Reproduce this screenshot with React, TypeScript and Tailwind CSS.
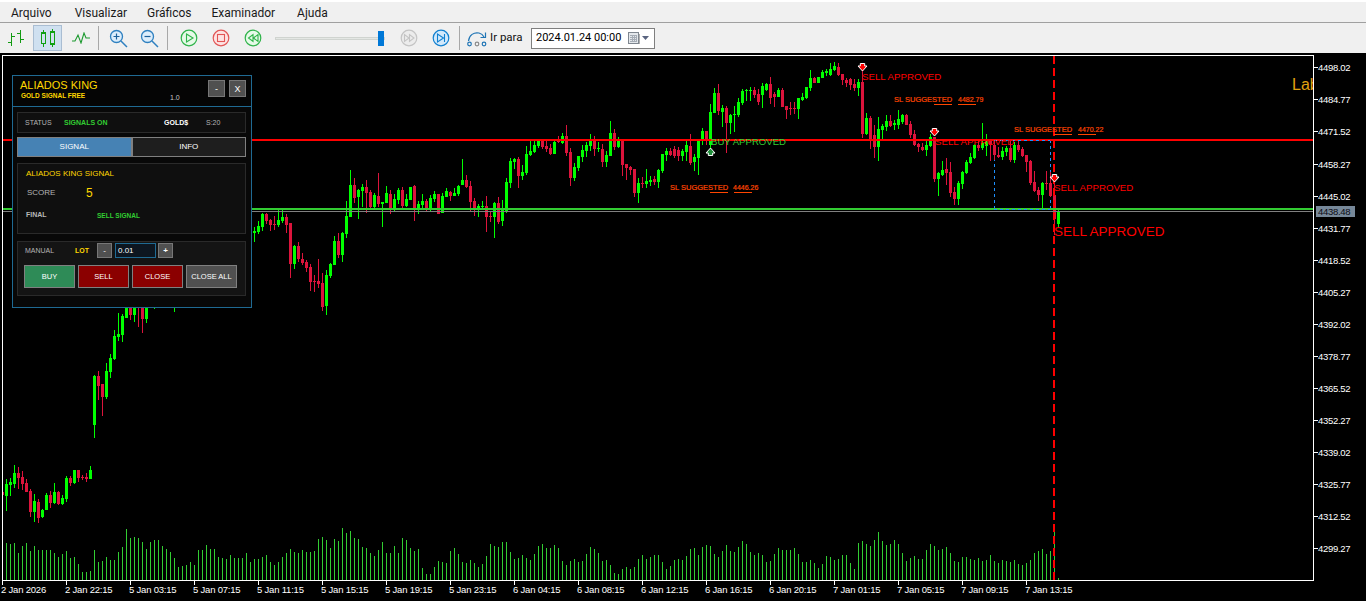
import React from "react";

type C = [number, number, number, number, number, number];
const candles: C[] = [
[6,479,484,496,511,1],[10,478,482,485,496,1],[14,465,473,484,488,1],[18,467,473,478,489,0],[22,471,477,484,490,0],[26,479,483,492,492,0],[30,489,491,512,517,0],[34,494,501,512,522,1],[38,499,502,518,523,0],[42,509,510,517,518,1],[46,493,495,510,510,1],[50,491,495,503,508,0],[54,483,492,503,504,1],[58,491,492,504,505,0],[62,495,498,504,505,1],[66,476,478,499,502,1],[70,476,478,483,486,0],[74,470,470,483,484,1],[78,470,470,478,482,0],[82,475,477,478,480,0],[86,473,477,479,482,0],[90,466,470,479,479,1],
[94,375,376,425,438,1],[98,371,376,386,400,0],[102,384,384,397,416,0],[106,363,371,397,399,1],[110,354,358,372,378,1],[114,330,336,359,360,1],[118,313,334,337,341,1],[122,314,316,335,342,1],
[126,300,300,318,318,1],[130,300,300,315,320,0],[134,300,300,315,322,1],[138,300,300,301,327,0],[142,300,300,319,333,0],[146,300,300,319,323,1],[154,300,300,301,309,1],[174,300,300,301,312,1],
[254,227,231,233,242,1],[258,221,226,232,234,1],[262,213,214,227,231,1],[266,213,214,221,224,0],[270,219,220,225,231,0],[274,216,224,225,230,0],[278,209,220,225,227,1],[282,209,217,221,223,1],[286,214,217,225,233,0],[290,223,223,264,278,0],[294,245,246,264,269,1],[298,242,246,259,262,0],[302,253,259,263,265,0],[306,260,262,268,272,0],[310,264,267,282,291,0],[314,275,281,282,292,0],[318,259,281,284,288,0],[322,273,283,307,311,0],[326,270,275,306,315,1],[330,263,264,276,278,1],[334,236,241,265,265,1],[338,233,241,255,258,0],[342,232,233,255,262,1],[346,201,216,234,238,1],[350,170,185,217,217,1],[354,178,185,198,203,0],[358,189,190,197,219,1],[362,184,187,191,207,1],[366,180,187,193,213,0],[370,190,192,207,209,0],[374,193,195,207,209,1],[378,173,196,204,207,0],[382,202,202,204,227,1],[386,186,193,203,203,1],[390,190,194,210,214,0],[394,194,199,210,211,1],[398,188,190,200,204,1],[402,187,190,206,209,0],[406,194,199,206,207,1],[410,187,187,200,200,1],[414,185,186,209,221,0],[418,201,204,209,214,1],[422,194,201,205,210,1],[426,199,201,208,212,0],[430,195,198,208,211,1],[434,191,194,199,202,1],[438,194,194,214,214,0],[442,193,196,213,213,1],[446,188,191,197,197,1],[450,191,192,196,201,0],[454,188,193,196,196,1],[458,185,186,194,196,1],[462,159,180,185,185,1],[466,175,180,187,188,0],[470,181,186,202,212,0],[474,198,201,210,216,0],[478,204,206,208,217,1],[482,201,206,207,208,1],[486,196,206,217,232,0],[490,212,216,217,222,0],[494,202,203,217,238,1],[498,197,203,222,224,0],[502,200,208,221,226,1],[506,178,182,212,213,1],[510,158,161,183,188,1],[514,158,159,162,169,1],[518,157,159,176,188,0],[522,165,172,176,180,1],[526,146,154,173,175,1],[530,140,151,155,156,1],[534,140,145,152,153,1],[538,140,141,146,148,1],
[542,140,140,147,149,0],[546,141,146,149,152,0],[550,144,148,154,155,0],[554,139,142,154,154,1],[558,136,139,142,143,0],[562,133,136,143,144,1],[566,125,136,153,156,0],[570,148,152,178,186,0],[574,163,167,178,181,1],[578,156,156,168,171,1],[582,145,150,157,162,1],[586,142,145,151,157,1],[590,134,139,146,151,1],[594,136,139,149,156,0],[598,142,148,149,152,1],[602,144,149,162,167,0],[606,151,155,162,167,1],[610,121,133,156,156,1],[614,129,133,147,150,0],[618,137,140,147,148,1],[622,139,140,165,176,0],[626,164,164,168,180,0],[630,166,167,170,175,0],[634,169,169,193,197,0],[638,178,183,193,203,1],[642,177,183,184,188,0],[646,169,181,184,188,1],[650,176,180,182,186,1],[654,176,179,182,185,0],[658,169,170,182,188,1],[662,154,154,171,173,1],[666,148,151,155,161,1],
[670,148,151,155,156,0],[674,146,149,156,158,0],[678,147,150,156,161,0],[682,149,151,156,161,1],[686,140,145,152,161,1],[690,134,146,163,165,0],[694,154,157,162,171,1],[698,140,140,158,175,1],[702,128,131,141,145,1],[706,131,131,141,145,0],[710,104,112,145,150,1],[714,88,93,113,113,1],[718,84,93,111,115,0],[722,105,108,112,127,1],[726,106,108,123,153,0],[730,114,115,123,134,1],[734,106,114,115,132,1],[738,98,102,115,117,1],[742,89,91,103,105,1],[746,89,90,91,101,1],[750,87,90,91,101,1],[754,87,90,95,98,0],[758,89,94,102,105,0],[762,83,86,95,108,1],[766,83,84,90,91,1],[770,77,84,98,104,0],[774,92,94,97,107,0],[778,88,90,97,97,1],[782,88,90,107,107,0],[786,106,106,110,119,0],[790,102,108,109,115,0],[794,102,108,109,114,0],[798,98,98,109,119,1],[802,93,97,100,101,1],[806,87,87,98,99,1],[810,70,78,88,91,1],[814,77,78,83,83,0],[818,77,77,83,83,1],[822,70,72,78,78,1],[826,69,71,73,76,1],[830,63,69,75,76,1],[834,62,66,70,71,1],[838,63,67,75,76,0],[842,74,74,80,85,0],[846,78,80,83,87,0],[850,78,79,85,90,0],[854,79,84,88,91,0],[858,79,82,88,96,1],[862,70,82,134,138,0],[866,113,118,134,135,1],[870,116,118,139,149,0],[874,125,135,147,158,0],[878,117,129,147,161,1],[882,124,126,130,140,1],[886,115,121,127,131,1],[890,115,121,126,127,0],[894,120,123,125,130,1],[898,110,119,125,129,1],[902,114,115,122,124,1],[906,114,115,125,125,0],[910,121,124,135,138,0],[914,130,134,145,146,0],[918,143,144,147,152,0],[922,143,147,150,151,0],[926,141,145,150,156,1],[930,134,137,146,147,1],[934,137,137,179,182,0],[938,172,173,179,196,1],[942,161,170,175,176,1],[946,158,169,173,185,0],[950,162,172,193,197,0],[954,187,192,199,205,0],[958,181,183,199,205,1],[962,171,172,184,189,1],[966,160,162,173,174,1],[970,153,157,163,164,1],[974,144,145,158,159,1],[978,140,145,148,151,0],[982,123,143,148,150,1],[986,134,140,146,156,1],[990,140,141,145,161,0],[994,141,145,155,160,0],[998,147,155,157,158,0],[1002,147,151,157,160,1],[1006,146,148,152,156,1],[1010,141,148,160,162,0],[1014,142,145,160,163,1],[1018,140,145,150,152,0],[1022,147,149,156,157,0],[1026,155,155,162,172,0],[1030,160,161,183,185,0],[1034,171,182,191,192,0],[1038,187,190,195,201,0],[1042,182,183,195,209,1],[1046,171,183,184,190,0],[1050,172,183,196,197,0],[1054,174,195,219,235,0],[1058,210,211,224,227,1],
];

const volLeft = [543,544,543,553,546,543,551,546,550,550,550,550,553,557,554,551,558,557,564,572,572,571,550,562,561,557,560,560,552,547,529,538,537,538,542,549,542,540,540,546,549,552,558,567,566,565,562,565,550,550,545,549,549,557,558,559,555,558,558,558,553,562,559,559,557,555,562,565,562,557,553,549,552,553,550,552,552,551,539,537,540,548,539,541,528,533,531,538,539,547,548,553,556,550,542,553,553,546,553];
const volRight = [557,559,560,558,561,560,555,561,563,560,561,562,560,564,565,563,560,553,551,549,554,551,532,578];
const midBase: [number, number, number][] = [[402,420,548],[420,450,565],[450,490,558],[490,510,550],[510,530,552],[530,560,552],[560,600,556],[600,650,565],[650,700,558],[700,730,546],[730,790,552],[790,830,558],[830,858,563],[858,880,538],[880,905,548],[905,966,553]];
const midVol = (x: number) => {
  const b = midBase.find((m) => x >= m[0] && x < m[1]);
  const base = b ? b[2] : 555;
  return Math.round(base + 7 * Math.sin(x * 1.7) + 4 * Math.sin(x * 0.37));
};
const volumes: [number, number][] = [];
volLeft.forEach((t, i) => volumes.push([6 + i * 4, t]));
for (let x = 402; x < 966; x += 4) volumes.push([x, midVol(x)]);
volRight.forEach((t, i) => volumes.push([966 + i * 4, t]));

const prices: [string, number][] = [["4498.02",67],["4484.77",99],["4471.52",131],["4458.27",164],["4445.02",196],["4431.77",228],["4418.52",260],["4405.27",292],["4392.02",324],["4378.77",356],["4365.52",388],["4352.27",420],["4339.02",452],["4325.77",484],["4312.52",516],["4299.27",548]];
const times = ["2 Jan 2026","2 Jan 22:15","5 Jan 03:15","5 Jan 07:15","5 Jan 11:15","5 Jan 15:15","5 Jan 19:15","5 Jan 23:15","6 Jan 04:15","6 Jan 08:15","6 Jan 12:15","6 Jan 16:15","6 Jan 20:15","7 Jan 01:15","7 Jan 05:15","7 Jan 09:15","7 Jan 13:15"];

const ChartFont = "'Liberation Sans', Arial, sans-serif";

function SellArrow({ x, y }: { x: number; y: number }) {
  return (
    <polygon transform={`translate(${x} ${y})`} points="-2.2,0.5 2.2,0.5 2.2,3 4.5,3 0,8 -4.5,3 -2.2,3" fill="#ff0000" stroke="#ffffff" strokeWidth="1" />
  );
}
function BuyArrow({ x, y }: { x: number; y: number }) {
  return (
    <polygon transform={`translate(${x} ${y})`} points="-2.2,7.5 2.2,7.5 2.2,5 4.5,5 0,0 -4.5,5 -2.2,5" fill="#1f8f3a" stroke="#ffffff" strokeWidth="1" />
  );
}

function SlLabel({ x, y, price, numX, u1, u2 }: { x: number; y: number; price: string; numX: number; u1: number; u2: number }) {
  return (
    <g>
      <text x={x} y={y} fontSize="7.5" fill="#ff4500" stroke="#ff4500" strokeWidth="0.2" fontFamily={ChartFont}>SL SUGGESTED</text>
      <text x={numX} y={y} fontSize="7" fill="#ff4500" stroke="#ff4500" strokeWidth="0.2" fontFamily={ChartFont}>{price}</text>
      <rect x={u1} y={y + 2} width="18" height="1" fill="#ff4500" shapeRendering="crispEdges" />
      <rect x={u2} y={y + 2} width="18" height="1" fill="#ff4500" shapeRendering="crispEdges" />
    </g>
  );
}

function Chart() {
  return (
    <svg className="absolute left-0 top-0" width="1366" height="548" viewBox="0 53 1366 548">
      <rect x="0" y="53" width="1366" height="548" fill="#000" />
      <g shapeRendering="crispEdges">
        <rect x="2" y="492" width="2" height="3" fill="#dc143c" />
        {volumes.map(([x, t]) => (
          <rect key={x} x={x} y={t} width="1" height={580 - t} fill="#32cd32" />
        ))}
        <path d="M994.5 140V209M1050.5 140V209" fill="none" stroke="#1e90ff" strokeWidth="1" strokeDasharray="3 3" />
        {candles.map(([x, hi, top, bot, lo, u]) => {
          const col = u ? "#00ff00" : "#dc143c";
          return (
            <g key={x}>
              <rect x={x} y={hi} width="1" height={lo - hi} fill={col} />
              <rect x={x - 1} y={top} width="3" height={Math.max(1, bot - top)} fill={col} />
            </g>
          );
        })}
        <rect x="3" y="139" width="1310" height="2" fill="#ff0000" />
        <rect x="3" y="208" width="1310" height="2" fill="#32cd32" />
        <rect x="3" y="211" width="1310" height="1" fill="#808080" />
        <path d="M994 140.5H1050M994 209.5H1050" fill="none" stroke="#1e90ff" strokeWidth="1" strokeDasharray="3 3" />
        <line x1="1054" y1="56" x2="1054" y2="580" stroke="#ff0000" strokeWidth="2" strokeDasharray="8 4" />
      </g>

      <text x="1292" y="90" fontSize="16" fill="#e0a010" fontFamily={ChartFont}>Lab</text>
      <rect x="1313" y="55" width="53" height="546" fill="#000" />

      <text x="862" y="80" fontSize="9.7" fill="#ff0000" fontFamily={ChartFont}>SELL APPROVED</text>
      <text x="935" y="145" fontSize="9.7" fill="#ff0000" fontFamily={ChartFont}>SELL APPROVED</text>
      <text x="1054" y="191" fontSize="9.7" fill="#ff0000" fontFamily={ChartFont}>SELL APPROVED</text>
      <text x="1054" y="236" fontSize="13.5" fill="#ff0000" fontFamily={ChartFont}>SELL APPROVED</text>
      <text x="711" y="145" fontSize="9.6" fill="#32cd32" fontFamily={ChartFont}>BUY APPROVED</text>

      <SlLabel x={670} y={190} price="4446.26" numX={733} u1={710} u2={734} />
      <SlLabel x={894} y={102} price="4482.79" numX={958} u1={934} u2={958} />
      <SlLabel x={1014} y={132} price="4470.22" numX={1078} u1={1054} u2={1078} />

      <SellArrow x={862.5} y={63} />
      <SellArrow x={934.5} y={128} />
      <SellArrow x={1054.5} y={174} />
      <BuyArrow x={710.5} y={148} />

      <g shapeRendering="crispEdges" fill="#fff">
        <rect x="2" y="55" width="1" height="526" />
        <rect x="2" y="55" width="1312" height="1" />
        <rect x="1313" y="55" width="1" height="526" />
        <rect x="2" y="580" width="1312" height="1" />
        {prices.map(([, y]) => (
          <rect key={y} x="1314" y={y} width="4" height="1" />
        ))}
        {times.map((_, i) => (
          <rect key={i} x={2 + i * 64} y="581" width="1" height="4" />
        ))}
      </g>
      <rect x="1316" y="206" width="39" height="11" fill="#778899" />
      <g fontFamily={ChartFont} fontSize="9.5" letterSpacing="-0.3" fill="#fff">
        {prices.map(([p, y]) => (
          <text key={p} x="1318" y={y + 3.5}>{p}</text>
        ))}
        <text x="1318" y="215" fill="#0b0b14">4438.48</text>
      </g>
      <g fontFamily={ChartFont} fontSize="9.5" letterSpacing="-0.2" fill="#fff">
        {times.map((t, i) => (
          <text key={t} x={1 + i * 64} y="593">{t}</text>
        ))}
      </g>
    </svg>
  );
}

function Panel() {
  return (
    <div className="absolute left-3 top-[22px] flex h-[233px] w-[240px] flex-col border border-[#1f6a93] bg-[#080808] text-[7px] leading-[10px] text-[#b4b4b4]">
      <div className="flex h-[31px] shrink-0 border-b border-[#1f6a93] bg-[#050505]">
        <div className="w-[151px] pl-[7px] pt-[3px]">
          <div className="text-[11px] leading-[12px] text-[#ffd700]">ALIADOS KING</div>
          <div className="pl-px pt-[1px] text-[6.5px] font-bold leading-[8px] text-[#ffd700]">GOLD SIGNAL FREE</div>
        </div>
        <div className="w-[44px] pt-[17px] pl-[6px] text-[7px] text-[#c8c8c8]">1.0</div>
        <div className="flex gap-[4px] pt-[4px]">
          <div className="flex h-[17px] w-[17px] items-center justify-center border border-[#777] bg-[#505050] text-[9px] text-white">-</div>
          <div className="flex h-[17px] w-[17px] items-center justify-center border border-[#777] bg-[#505050] text-[9px] text-white">X</div>
        </div>
      </div>
      <div className="flex flex-col pl-[4px] pr-[5px] pt-[5px]">
        <div className="flex h-[21px] items-center border border-[#2a2a2a] bg-[#0f0f0f] pl-[7px]">
          <span className="w-[39px]">STATUS</span>
          <span className="w-[100px] font-bold text-[#32cd32]">SIGNALS ON</span>
          <span className="w-[42px] font-bold text-white">GOLD$</span>
          <span>S:20</span>
        </div>
        <div className="mt-[4px] flex h-[20px]">
          <div className="flex flex-1 items-center justify-center border border-[#808080] bg-[#4682b4] text-[8px] text-white">SIGNAL</div>
          <div className="flex flex-1 items-center justify-center border border-[#808080] bg-[#1e1e1e] text-[8px] text-white">INFO</div>
        </div>
        <div className="mt-[6px] h-[71px] border border-[#2a2a2a] bg-[#0f0f0f] pl-[8px] pt-[5px]">
          <div className="text-[8px] text-[#ffd700]">ALIADOS KING SIGNAL</div>
          <div className="mt-[7px] flex h-[14px] items-center pl-px">
            <span className="w-[59px] text-[8px]">SCORE</span>
            <span className="text-[12px] text-[#ffd700]">5</span>
          </div>
          <div className="mt-[10px] flex">
            <span className="w-[71px] font-bold text-[#b8b8b8]">FINAL</span>
            <span className="pt-px text-[6.5px] font-bold text-[#32cd32]">SELL SIGNAL</span>
          </div>
        </div>
        <div className="mt-[7px] h-[55px] border border-[#2a2a2a] bg-[#141414] pt-px">
          <div className="flex h-[15px] items-center pl-[7px]">
            <span className="w-[50px]">MANUAL</span>
            <span className="w-[22px] font-bold text-[#ffd700]">LOT</span>
            <div className="flex h-[15px] w-[15px] items-center justify-center border border-[#777] bg-[#505050] text-[8px] text-white">-</div>
            <div className="ml-[3px] flex h-[15px] w-[41px] items-center border border-[#1f6a93] bg-[#0d1620] pl-[2px] text-[8px] text-white">0.01</div>
            <div className="ml-[2px] flex h-[15px] w-[15px] items-center justify-center border border-[#777] bg-[#505050] text-[8px] font-bold text-white">+</div>
          </div>
          <div className="mt-[7px] flex gap-[3px] pl-[6px] text-[7.5px] text-white">
            <div className="flex h-[23px] w-[51px] items-center justify-center border border-[#808080] bg-[#2e8b57]">BUY</div>
            <div className="flex h-[23px] w-[51px] items-center justify-center border border-[#808080] bg-[#8b0000]">SELL</div>
            <div className="flex h-[23px] w-[51px] items-center justify-center border border-[#808080] bg-[#8b0000]">CLOSE</div>
            <div className="flex h-[23px] w-[51px] items-center justify-center border border-[#808080] bg-[#505050]">CLOSE ALL</div>
          </div>
        </div>
      </div>
    </div>
  );
}

const Sep = () => <div className="h-[24px] w-px bg-[#a8a8a8]" />;

function Round({ color, fill, children }: { color: string; fill: string; children: React.ReactNode }) {
  return (
    <svg width="18" height="18" viewBox="0 0 18 18" fill="none">
      <circle cx="9" cy="9" r="7.8" stroke={color} strokeWidth="1.2" fill={fill} />
      <g stroke={color} strokeWidth="1.1">{children}</g>
    </svg>
  );
}

function Magnifier({ plus }: { plus: boolean }) {
  return (
    <svg width="19" height="19" viewBox="0 0 19 19" fill="none">
      <circle cx="7.5" cy="7.5" r="6" stroke="#2f80c0" strokeWidth="1.3" fill="#dcedfb" />
      <path d="M12 12 L18 18" stroke="#2f80c0" strokeWidth="1.5" />
      <path d={plus ? "M4.5 7.5H10.5M7.5 4.5V10.5" : "M4.5 7.5H10.5"} stroke="#1a5f9a" strokeWidth="1.2" />
    </svg>
  );
}

function Toolbar() {
  return (
    <div className="flex h-[30px] shrink-0 items-center bg-[#f0f0f0]">
      <div className="ml-[7px] flex w-[18px] justify-center">
        <svg width="18" height="18" viewBox="0 0 18 18" fill="none" stroke="#129a12" strokeWidth="1" shapeRendering="crispEdges">
          <path d="M4.5 4V17M1 13.5H4.5M4.5 7.5H8M13.5 1V14M10 4.5H13.5M13.5 10.5H17" />
        </svg>
      </div>
      <div className="ml-[8px] flex h-[26px] w-[29px] items-center justify-center border border-[#a9bdd2] bg-[#cfe0f0]">
        <svg width="16" height="18" viewBox="0 0 16 18" fill="none" stroke="#0fa00f" strokeWidth="1.2" shapeRendering="crispEdges">
          <path d="M3.5 1V4M3.5 14.5V18M12.5 0V3M12.5 15V18" />
          <rect x="1.5" y="4" width="4" height="10.5" />
          <rect x="10.5" y="3" width="4" height="12" />
        </svg>
      </div>
      <div className="ml-[10px] flex w-[18px] justify-center">
        <svg width="18" height="12" viewBox="0 0 18 12" fill="none" stroke="#1d9a30" strokeWidth="1.1">
          <path d="M0 9H3L6 3L9 11L12 1L14 6H18" />
        </svg>
      </div>
      <div className="ml-[8px]"><Sep /></div>
      <div className="ml-[10px]"><Magnifier plus /></div>
      <div className="ml-[12px]"><Magnifier plus={false} /></div>
      <div className="ml-[8px]"><Sep /></div>
      <div className="ml-[12px]">
        <Round color="#2fb34a" fill="#e6fae8"><path d="M6.5 5V13L13 9Z" /></Round>
      </div>
      <div className="ml-[14px]">
        <Round color="#e25555" fill="#fde3e3"><rect x="5.5" y="5.5" width="7" height="7" /></Round>
      </div>
      <div className="ml-[14px]">
        <Round color="#2fb34a" fill="#e6fae8"><path d="M9 5.5V12.5L4.5 9ZM14 5.5V12.5L9.5 9Z" /></Round>
      </div>
      <div className="relative ml-[13px] h-[3px] w-[110px] border border-[#d0d4d0] bg-[#e4e7e4]">
        <div className="absolute right-0 top-[-7px] h-[15px] w-[6px] bg-[#0078d7]" />
      </div>
      <div className="ml-[15px]">
        <Round color="#c4c4c4" fill="#ececec"><path d="M4.5 5.5V12.5L9 9ZM9.5 5.5V12.5L14 9Z" /></Round>
      </div>
      <div className="ml-[14px]">
        <Round color="#1180d0" fill="#d3e9fb"><path d="M5.5 5V13L11.5 9ZM12.5 5V13" /></Round>
      </div>
      <div className="ml-[9px]"><Sep /></div>
      <div className="ml-[7px]">
        <svg width="20" height="18" viewBox="0 0 20 18" fill="none" stroke="#2075b5" strokeWidth="1.2">
          <path d="M1.5 12C2 6 7 3 12 4C14 4.5 16 6 17 8" />
          <path d="M18.5 3.5V8.5H13.5" />
          <circle cx="2.5" cy="15" r="1.8" />
          <circle cx="10" cy="15" r="1.8" stroke="#8a8a8a" />
          <circle cx="17" cy="15" r="1.8" />
        </svg>
      </div>
      <span className="ml-[3px] w-[33px] whitespace-nowrap text-[11.5px] text-[#111]">Ir para</span>
      <div className="ml-[8px] flex h-[21px] w-[124px] items-center border border-[#7f7f7f] bg-white pl-[4px] text-[11px] text-black">
        <span className="w-[92px] whitespace-nowrap">2024.01.24 00:00</span>
        <svg width="13" height="13" viewBox="0 0 13 13" shapeRendering="crispEdges">
          <rect x="0.5" y="0.5" width="10" height="11" fill="#e4e8ec" stroke="#7f8790" />
          <rect x="11" y="2" width="1" height="10" fill="#b0b0b0" />
          <path d="M2 3.5H9M2 5.5H9M2 7.5H9M2 9.5H9M4 3V10M6 3V10M8 3V10" stroke="#a6adb6" strokeWidth="1" />
        </svg>
        <svg width="7" height="4" viewBox="0 0 7 4" className="ml-[1px]"><path d="M0 0H7L3.5 4Z" fill="#5a6480" /></svg>
      </div>
    </div>
  );
}

export default function App() {
  const menus: [string, string][] = [["Arquivo", "ml-[11px]"], ["Visualizar", "ml-[23px]"], ["Gráficos", "ml-[20px]"], ["Examinador", "ml-[20px]"], ["Ajuda", "ml-[22px]"]];
  return (
    <div className="flex h-[601px] w-[1366px] flex-col overflow-hidden bg-[#f0f0f0] font-['Roboto',sans-serif]">
      <div className="flex h-[23px] shrink-0 items-center border-b border-[#a0a0a0] border-t-2 border-t-white pt-px text-[12px] text-[#1a1a1a]">
        {menus.map(([m, c]) => (
          <span key={m} className={c}>{m}</span>
        ))}
      </div>
      <Toolbar />
      <div className="relative flex-1 bg-black font-['Liberation_Sans',sans-serif]">
        <Chart />
        <Panel />
      </div>
    </div>
  );
}
